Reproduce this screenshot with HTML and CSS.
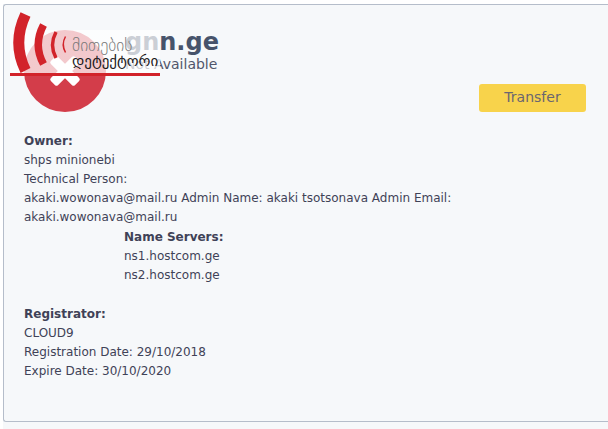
FILE: index.html
```
<!DOCTYPE html>
<html lang="en">
<head>
<meta charset="utf-8">
<title>gnn.ge</title>
<link rel="stylesheet" href="styles.css">
</head>
<body>
<main class="page">
  <article class="card">
    <header class="head">
      <svg class="status" viewBox="0 0 82 82" aria-hidden="true">
        <circle cx="41" cy="41" r="41" fill="#d33d4a"/>
        <g fill="#fff" transform="rotate(45 41 41)">
          <rect x="36" y="24" width="10" height="34" rx="2"/>
          <rect x="24" y="36" width="34" height="10" rx="2"/>
        </g>
      </svg>
      <div class="title">
        <h1>gnn.ge</h1>
        <p>Not Available</p>
      </div>
    </header>
    <div class="actions"><button type="button">Transfer</button></div>
    <section class="owner">
      <h2>Owner:</h2>
      <p>shps minionebi</p>
      <p>Technical Person:</p>
      <p>akaki.wowonava@mail.ru Admin Name: akaki tsotsonava Admin Email: akaki.wowonava@mail.ru</p>
    </section>
    <section class="servers">
      <h2>Name Servers:</h2>
      <p>ns1.hostcom.ge</p>
      <p>ns2.hostcom.ge</p>
    </section>
    <section class="registrator">
      <h2>Registrator:</h2>
      <p>CLOUD9</p>
      <p>Registration Date: 29/10/2018</p>
      <p>Expire Date: 30/10/2020</p>
    </section>
  </article>
  <div class="watermark" lang="ka">
    <svg class="waves" viewBox="0 0 62 66" aria-hidden="true">
      <g fill="none" stroke="#d2232a">
        <path d="M15.500 4.500Q2 33 15.500 60.500" stroke-width="11"/>
        <path d="M33.500 15Q23 35 33.500 54" stroke-width="7.500"/>
        <path d="M46 22Q39 35 46 48" stroke-width="3.500"/>
        <path d="M55.500 26.500Q51 34.500 55.500 42.500" stroke-width="1.500"/>
      </g>
    </svg>
    <div class="words">
      <span class="top">მითების</span>
      <span class="bottom">დეტექტორი</span>
    </div>
  </div>
</main>
</body>
</html>
```
FILE: styles.css
```
* { box-sizing: border-box; }
body {
  margin: 0;
  background: #fff;
  color: #3f4257;
  font: 12px/19px "DejaVu Sans", sans-serif;
}
h1, h2, p { margin: 0; }
.page {
  position: relative;
  margin: 4px 0 0 3px;
  padding-bottom: 7px;
  background: #f6f8fa;
}
.card {
  padding: 25px 22px 40px 20px;
  border: 1px solid #b5bdca;
  border-right: 0;
  border-radius: 3px 0 0 3px;
}
.head {
  display: flex;
  gap: 19px;
}
.status {
  width: 82px;
  height: 82px;
}
.title h1 {
  font-size: 24px;
  line-height: 24px;
  color: #46536b;
}
.title p {
  font-size: 14px;
  line-height: 20px;
  color: #51566b;
}
.actions {
  display: flex;
  justify-content: flex-end;
  margin-top: -28px;
}
button {
  width: 107px;
  height: 28px;
  padding: 0 0 2px;
  border: 0;
  border-radius: 3px;
  background: #f8d34b;
  color: #6b6670;
  font: 14px "DejaVu Sans", sans-serif;
}
h2 {
  font-size: 12px;
  line-height: 19px;
}
.owner {
  max-width: 440px;
  margin-top: 20px;
}
.servers {
  margin: 1px 0 0 100px;
}
.registrator { margin-top: 20px; }
.watermark {
  position: absolute;
  left: 7px;
  top: 6px;
  display: flex;
  width: 150px;
  height: 66px;
  border-bottom: 3px solid #d2232a;
  background: linear-gradient(transparent 20px, rgba(255, 255, 255, 0.72) 20px);
}
.waves {
  flex: none;
  width: 62px;
  height: 66px;
}
.words {
  display: flex;
  flex-direction: column;
  padding-top: 27px;
  font-size: 15px;
  line-height: 16px;
  white-space: nowrap;
}
.top {
  color: #777;
  font-size: 17px;
  font-weight: 200;
}
.bottom { color: #1c1a1b; }
```
